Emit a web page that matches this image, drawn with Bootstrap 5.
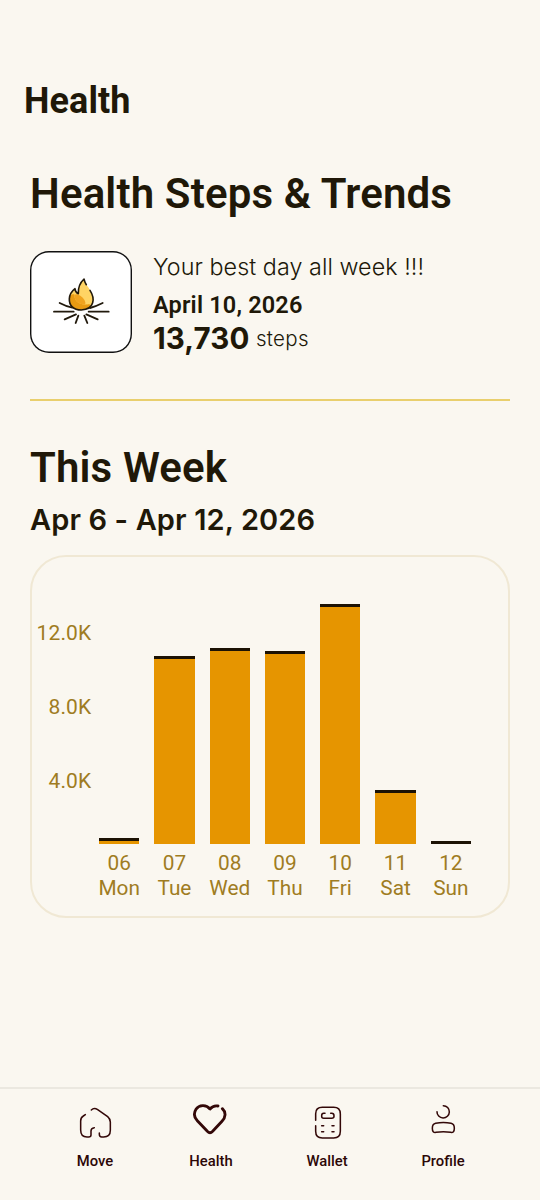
<!DOCTYPE html>
<html lang="en">
<head>
<meta charset="utf-8">
<meta name="viewport" content="width=device-width, initial-scale=1">
<title>Health</title>
<link href="https://cdn.jsdelivr.net/npm/bootstrap@5.3.0/dist/css/bootstrap.min.css" rel="stylesheet">
<style>
  body { background: #faf7f0; color: #201808; font-family: Roboto, sans-serif; }
  .screen { height: 1200px; padding-top: 79px; overflow: hidden; }
  .app-title { font-size: 36px; line-height: 44px; font-weight: 700; padding-left: 24px; margin-bottom: 46px; letter-spacing: .1px; }
  .page-title { font-size: 42px; line-height: 50px; font-weight: 600; letter-spacing: .15px; }
  .public { font-family: Inter, sans-serif; }
  .best { margin-top: 31px; gap: 21px; }
  .best-icon { width: 102px; height: 102px; border-radius: 19px; background: #fff; box-shadow: inset 0 0 0 1.4px #111; margin-top: .5px; }
  .best-label { font-size: 23.3px; line-height: 32px; font-weight: 300; letter-spacing: .06px; padding-top: .5px; }
  .best-date { font-size: 23.5px; line-height: 32px; font-weight: 600; margin-top: 6px; letter-spacing: .18px; }
  .best-count { font-size: 29.5px; line-height: 34px; font-weight: 700; letter-spacing: .1px; }
  .best-unit { font-size: 20.5px; line-height: 27px; font-weight: 300; padding-top: 4px; margin-left: 6.5px; letter-spacing: .3px; }
  .rule { height: 2px; background: #e9cf6d; margin-top: 44.5px; }
  .week-title { margin-top: 42px; }
  .week-range { font-size: 29px; line-height: 36px; font-weight: 600; margin-top: 9px; letter-spacing: .12px; }
  .chart { height: 363px; border: 2px solid #f0e8d4; border-radius: 36px; margin-top: 17px; padding: 47px 37px 0 5px; color: #9f7c22; font-size: 21px; line-height: 25px; }
  .axis { width: 54.5px; padding-top: 17px; gap: 49.2px; letter-spacing: .2px; }
  .plot { gap: 15px; padding-left: 7.5px; }
  .bars { height: 240px; }
  .bar { background: #e69500; border-top: 3px solid #1c1204; }
  .day { flex: 1 1 0; min-width: 0; white-space: nowrap; }
  .day-label { margin-top: 7px; display: flex; flex-direction: column; align-items: center; font-size: 20.8px; }
  .tabs { height: 113px; border-top: 2px solid #ebe8e0; padding: 11px 37px 0; color: #2c0707; font-size: 14.8px; line-height: 20px; font-weight: 500; }
  .tab { width: 116px; }
  .tab svg { width: 40px; height: 40px; margin-bottom: 11px; fill: none; stroke: #330808; stroke-width: 4.6; stroke-linecap: round; stroke-linejoin: round; }
  .tab svg.heart { stroke-width: 8.5; }
</style>
</head>
<body>
<div class="screen d-flex flex-column">
  <header class="app-title"><span>Health</span></header>
  <main class="d-flex flex-column flex-grow-1" style="padding:0 30px">
    <h1 class="page-title m-0"><span>Health Steps &amp; Trends</span></h1>
    <section class="best d-flex">
      <div class="best-icon flex-shrink-0">
        <svg class="d-block w-100 h-100" viewBox="30 31 306 306" fill="none" stroke="#21190c" stroke-linecap="round" stroke-width="5.5">
          <path d="M119 187Q140 198 157 201M248 187Q226 198 210 202M102 213H161M206 213H266M168 221L134 236M199 221L233 236M175 225L167 247M193 225L202 247"/>
          <path d="M192 115C196 134 216 148 220 172C223 195 206 208 184 208C160 208 147 194 148 174C149 160 156 151 165 144C165 151 169 156 175 159C174 141 179 127 192 115Z" fill="#ffd464" stroke="none"/>
          <path d="M163 161C162 178 174 191 194 192C204 192 209 189 212 193C206 204 196 208 184 208C160 208 147 194 148 174C149 164 154 159 163 161Z" fill="#e89a12" stroke="none"/>
          <path d="M163 163C168 158 175 161 181 165C192 173 198 182 196 192C174 192 162 178 163 163Z" fill="#f0a31f" stroke="none"/>
          <path d="M210 149C225 172 225 206 184 208C160 208 147 194 148 174C149 160 156 151 165 144C165 151 169 156 175 159C174 141 179 127 192 115Q194 125 199 132" stroke-width="4.8" stroke-linejoin="round"/>
        </svg>
      </div>
      <div>
        <div class="best-label public"><span>Your best day all week !!!</span></div>
        <div class="best-date"><span>April 10, 2026</span></div>
        <div class="d-flex">
          <span class="best-count public">13,730</span>
          <span class="best-unit public">steps</span>
        </div>
      </div>
    </section>
    <div class="rule"></div>
    <h2 class="page-title week-title mb-0"><span>This Week</span></h2>
    <div class="week-range public"><span>Apr 6 - Apr 12, 2026</span></div>
    <section class="chart d-flex">
      <div class="axis d-flex flex-column align-items-end"><span>12.0K</span><span>8.0K</span><span>4.0K</span></div>
      <div class="plot d-flex flex-grow-1">
        <div class="day"><div class="bars d-flex align-items-end"><div class="bar w-100" style="height:6.5px"></div></div><div class="day-label"><span>06</span><span>Mon</span></div></div>
        <div class="day"><div class="bars d-flex align-items-end"><div class="bar w-100" style="height:188.3px"></div></div><div class="day-label"><span>07</span><span>Tue</span></div></div>
        <div class="day"><div class="bars d-flex align-items-end"><div class="bar w-100" style="height:195.6px"></div></div><div class="day-label"><span>08</span><span>Wed</span></div></div>
        <div class="day"><div class="bars d-flex align-items-end"><div class="bar w-100" style="height:193.3px"></div></div><div class="day-label"><span>09</span><span>Thu</span></div></div>
        <div class="day"><div class="bars d-flex align-items-end"><div class="bar w-100" style="height:240px"></div></div><div class="day-label"><span>10</span><span>Fri</span></div></div>
        <div class="day"><div class="bars d-flex align-items-end"><div class="bar w-100" style="height:54px"></div></div><div class="day-label"><span>11</span><span>Sat</span></div></div>
        <div class="day"><div class="bars d-flex align-items-end"><div class="bar w-100" style="height:3px"></div></div><div class="day-label"><span>12</span><span>Sun</span></div></div>
      </div>
    </section>
  </main>
  <nav class="tabs d-flex">
    <div class="tab d-flex flex-column align-items-center">
      <svg viewBox="45 60 120 120"><path d="M94 90Q102 82 113 89L143 110Q151 117 151 126V151Q151 171 131 171H125Q118 171 118 163V159M103 143Q93 144 93 153V165Q93 171 86 171H81Q62 171 62 150V123Q62 112 70 108L76 104"/></svg>
      <span>Move</span>
    </div>
    <div class="tab d-flex flex-column align-items-center">
      <svg class="heart" viewBox="393 60 120 120"><path d="M474 78Q460 75 450 87C439 73 417 74 408 88C400 101 403 113 412 122L442 154Q450 162 458 154L486 124C497 112 499 97 487 86"/></svg>
      <span>Health</span>
    </div>
    <div class="tab d-flex flex-column align-items-center">
      <svg viewBox="51 60 120 120"><path d="M77 121V101Q77 82 97 82H131Q151 82 151 102V154Q151 174 131 174H97Q77 174 77 154V137"/><path d="M105 100H101Q95 100 95 107V109Q95 115 101 115H125Q132 115 132 109V107Q132 100 125 100H122M95 137H101M126 137H132M95 155H101M126 155H132"/></svg>
      <span>Wallet</span>
    </div>
    <div class="tab d-flex flex-column align-items-center">
      <svg viewBox="399 60 120 120"><path d="M460 77A18.5 18.5 0 1 1 441 95M437 130Q460 125 483 130Q493 132 493 145Q493 159 482 157Q460 154 438 157Q427 159 427 145Q427 132 437 130Z"/></svg>
      <span>Profile</span>
    </div>
  </nav>
</div>
<script src="https://cdn.jsdelivr.net/npm/bootstrap@5.3.0/dist/js/bootstrap.bundle.min.js"></script>
</body>
</html>
